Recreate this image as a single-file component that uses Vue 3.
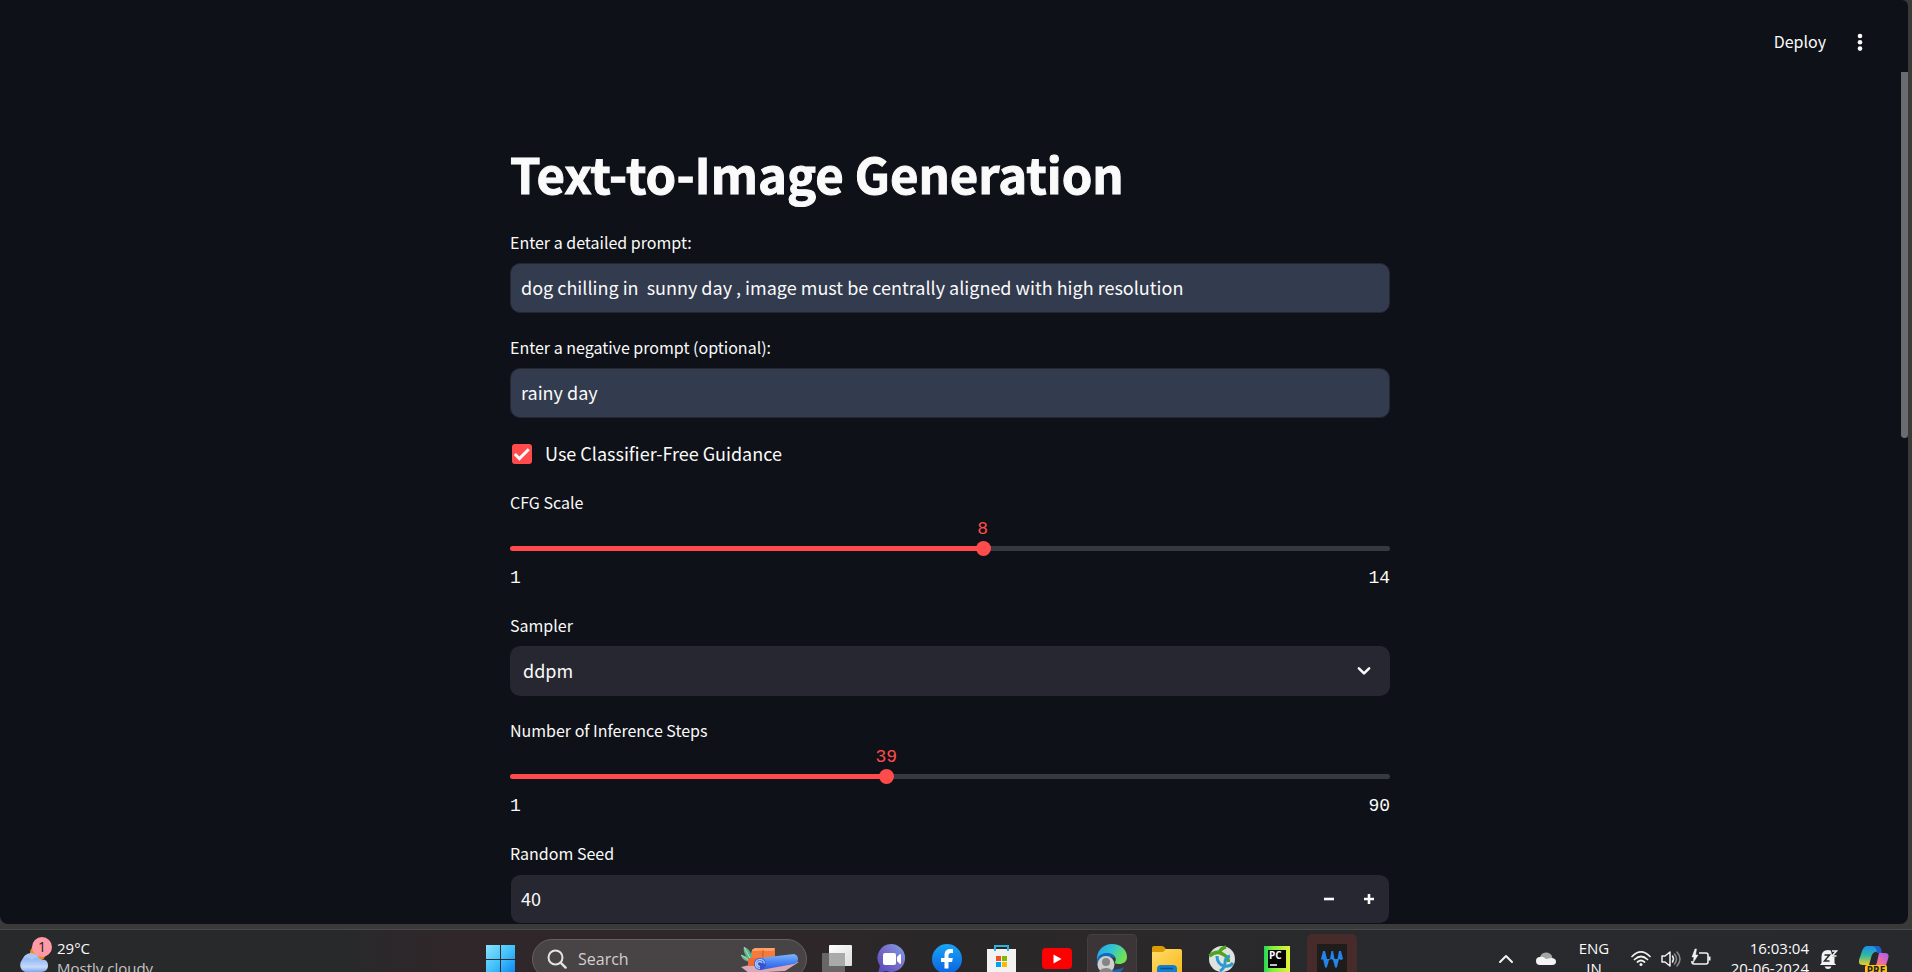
<script setup>
import { ref, computed } from 'vue'

const prompt = ref('dog chilling in  sunny day , image must be centrally aligned with high resolution')
const negativePrompt = ref('rainy day')
const useGuidance = ref(true)
const sampler = ref('ddpm')
const seed = ref(40)
const cfg = ref(8)
const steps = ref(39)

const fraction = (value, max) => (value - 1) / (max - 1)
const cfgStyle = computed(() => ({ '--f': fraction(cfg.value, 14) }))
const stepsStyle = computed(() => ({ '--f': fraction(steps.value, 90) }))
</script>

<template>
  <div class="screen">
    <div class="window-frame">
      <div class="window">
        <div class="content">
          <header class="toolbar">
            <button type="button" class="deploy">Deploy</button>
            <button type="button" class="menu" aria-label="Main menu">
              <svg width="20" height="20" viewBox="0 0 20 20" fill="#fafafa">
                <circle cx="10" cy="4" r="2.3" /><circle cx="10" cy="10.3" r="2.3" /><circle cx="10" cy="16.6" r="2.3" />
              </svg>
            </button>
          </header>

          <main class="column">
            <h1>Text-to-Image Generation</h1>
            <div class="field">
              <label for="prompt">Enter a detailed prompt:</label>
              <input id="prompt" v-model="prompt" type="text" class="text" />
            </div>
            <div class="field">
              <label for="negative">Enter a negative prompt (optional):</label>
              <input id="negative" v-model="negativePrompt" type="text" class="text" />
            </div>
            <label class="check">
              <span class="box">
                <input v-model="useGuidance" type="checkbox" />
                <svg v-if="useGuidance" width="20" height="20" viewBox="0 0 20 20" fill="none" stroke="#fafafa" stroke-width="3">
                  <path d="M2.8 10l4.6 4.6L16.8 5.3" />
                </svg>
              </span>
              <span>Use Classifier-Free Guidance</span>
            </label>
            <div class="slider" :style="cfgStyle">
              <label for="cfg">CFG Scale</label>
              <div class="rail">
                <output for="cfg">{{ cfg }}</output>
                <input id="cfg" v-model.number="cfg" type="range" min="1" max="14" />
              </div>
              <div class="ticks"><span>1</span><span>14</span></div>
            </div>
            <div class="field">
              <label for="sampler">Sampler</label>
              <div class="select">
                <select id="sampler" v-model="sampler"><option>ddpm</option></select>
                <svg width="20" height="20" viewBox="0 0 20 20" fill="none" stroke="#fafafa" stroke-width="2.6" stroke-linecap="round" stroke-linejoin="round">
                  <path d="M4.9 7.4l5.1 5 5.1-5" />
                </svg>
              </div>
            </div>
            <div class="slider" :style="stepsStyle">
              <label for="steps">Number of Inference Steps</label>
              <div class="rail">
                <output for="steps">{{ steps }}</output>
                <input id="steps" v-model.number="steps" type="range" min="1" max="90" />
              </div>
              <div class="ticks"><span>1</span><span>90</span></div>
            </div>
            <div class="field">
              <label for="seed">Random Seed</label>
              <div class="number">
                <input id="seed" v-model.number="seed" type="number" />
                <button type="button" aria-label="Decrease" @click="seed--">
                  <svg width="10" height="10" viewBox="0 0 10 10" stroke="#fafafa" stroke-width="2.6"><path d="M0 5h10" /></svg>
                </button>
                <button type="button" aria-label="Increase" @click="seed++">
                  <svg width="10" height="10" viewBox="0 0 10 10" stroke="#fafafa" stroke-width="2.6"><path d="M0 5h10M5 0v10" /></svg>
                </button>
              </div>
            </div>
          </main>
        </div>
        <div class="scrollbar"><div class="scroll-thumb"></div></div>
      </div>
    </div>

    <footer class="taskbar">
      <div class="left">
        <button type="button" class="weather">
          <svg width="40" height="42" viewBox="0 0 40 42">
            <defs>
              <linearGradient id="cl" x1="0" y1="0" x2="0" y2="1"><stop offset="0" stop-color="#8db4f2" /><stop offset=".65" stop-color="#c6dafa" /><stop offset="1" stop-color="#7ba5ec" /></linearGradient>
            </defs>
            <circle cx="22" cy="23" r="8" fill="#f08a1c" />
            <circle cx="15" cy="32" r="9" fill="#a9c6f7" />
            <path d="M9 42a7.500 7.500 0 0 1 0-14c3-.5 5 0 7 2 3-3 7-3 10 0 4-1 6 2 6 5.500S30 42 25 42z" fill="url(#cl)" />
            <circle cx="26" cy="17" r="10" fill="#ff9aa6" />
            <text x="26" y="22" text-anchor="middle" font-size="14" fill="#222" font-family="Open Sans, sans-serif">1</text>
          </svg>
          <span class="lines"><span>29°C</span><span class="dim">Mostly cloudy</span></span>
        </button>
      </div>

      <nav class="apps">
        <button type="button" class="tile start" aria-label="Start">
          <svg width="50" height="50" viewBox="0 0 50 50">
            <defs><linearGradient id="win" x1="0" y1="0" x2="1" y2="1"><stop offset="0" stop-color="#8be2fd" /><stop offset=".5" stop-color="#43c2fb" /><stop offset="1" stop-color="#0a84f0" /></linearGradient></defs>
            <path d="M11 11h14v14H11zM26 11h14v14H26zM11 26h14v14H11zM26 26h14v14H26z" fill="url(#win)" />
          </svg>
        </button>
        <div class="search">
          <svg width="20" height="20" viewBox="0 0 20 20" fill="none" stroke="#e4e2e2" stroke-width="2">
            <circle cx="8.500" cy="8.500" r="7" /><path d="M13.600 13.600l5 5" stroke-linecap="round" stroke-width="2.4" />
          </svg>
          <input type="text" placeholder="Search" aria-label="Search" />
          <svg width="60" height="28" viewBox="0 0 60 28">
            <defs><linearGradient id="mat" x1="0" y1="0" x2="0" y2="1"><stop offset="0" stop-color="#7eb6fb" /><stop offset=".5" stop-color="#4a86f5" /><stop offset="1" stop-color="#3459dc" /></linearGradient></defs>
            <path d="M1 22l13-3 45-2-14 9-36 2z" fill="#d9a9b6" />
            <path d="M10 17c-5-1-8-3-9-7 3 0 5 1 6 2C4 9 3 5 4 2c4 1 6 4 7 7 0-2 1-4 2-5 1 4 1 9-1 13z" fill="#61b58a" />
            <path d="M1 10l9 6M4 2l7 13" stroke="#a8dfc0" fill="none" />
            <path d="M12 5l3-2h20v10l-3 2H12z" fill="#f47a3d" /><path d="M12 5l3-2h20l-2 3H12z" fill="#ffa067" /><path d="M23 5v8" stroke="#c95a26" />
            <path d="M8 13h13v8H8z" fill="#ef6b35" />
            <path d="M20 13l34-4q4 1 4 5t-4 5l-34 6z" fill="url(#mat)" />
            <circle cx="20" cy="19" r="6" fill="#3654ce" /><path d="M24.500 18.500a4.500 4.500 0 1 0-4.500 5M22 18a2.500 2.500 0 1 0-2 3.500" fill="none" stroke="#a7c8ff" stroke-width="1.500" />
          </svg>
        </div>
        <button type="button" class="tile" aria-label="Task view">
          <svg width="50" height="50" viewBox="0 0 50 50">
            <defs><linearGradient id="tv" x1="0" y1="0" x2="1" y2="1"><stop offset="0" stop-color="#fff" /><stop offset="1" stop-color="#dcdcdc" /></linearGradient></defs>
            <rect x="17" y="11" width="23" height="21" rx="1" fill="url(#tv)" /><rect x="10" y="19" width="23" height="21" rx="1" fill="#777" fill-opacity=".8" />
            <path d="M17 19h16v13H17z" fill="#aaa" />
          </svg>
        </button>
        <button type="button" class="tile" aria-label="Chat">
          <svg width="50" height="50" viewBox="0 0 50 50">
            <defs><linearGradient id="chat" x1="1" y1="0" x2="0" y2="1"><stop offset="0" stop-color="#7ba3ee" /><stop offset=".45" stop-color="#7a70c8" /><stop offset="1" stop-color="#5146b8" /></linearGradient></defs>
            <path d="M25 10a14 14 0 1 1-6 27l-8 2 2-7A14 14 0 0 1 25 10z" fill="url(#chat)" />
            <rect x="16" y="19" width="13" height="12" rx="2" fill="#fff" /><path d="M30 23l3-3q1 0 1 1v8q0 1-1 1l-3-3z" fill="#fff" />
          </svg>
        </button>
        <button type="button" class="tile" aria-label="Facebook">
          <svg width="50" height="50" viewBox="0 0 50 50">
            <defs><linearGradient id="fb" x1="0" y1="0" x2="0" y2="1"><stop offset="0" stop-color="#1aa4f6" /><stop offset="1" stop-color="#0b62e0" /></linearGradient></defs>
            <circle cx="25" cy="25" r="15" fill="url(#fb)" />
            <path d="M22.500 34.500v-6.500h-3.500v-4h3.500v-3c0-4 2.500-6 5.500-6 1 0 2 .1 3 .3v3.700h-2c-1.800 0-2.500 1-2.500 2.300V24h4.300l-.7 4h-3.600v6.500z" fill="#fff" />
          </svg>
        </button>
        <button type="button" class="tile" aria-label="Store">
          <svg width="50" height="50" viewBox="0 0 50 50">
            <path d="M10 15h29v22q0 3-3 3H13q-3 0-3-3z" fill="#f2f2f2" /><path d="M18 17v-5h13v5" fill="none" stroke="#2bb5dd" stroke-width="2" />
            <path d="M19 22h5v5h-5z" fill="#f25022" /><path d="M25 22h5v5h-5z" fill="#7fba00" /><path d="M19 28h5v5h-5z" fill="#00a4ef" /><path d="M25 28h5v5h-5z" fill="#ffb900" />
          </svg>
        </button>
        <button type="button" class="tile" aria-label="YouTube">
          <svg width="50" height="50" viewBox="0 0 50 50"><rect x="10" y="14" width="30" height="21" rx="4" fill="#f00" /><path d="M21.500 20.500v9l8-4.500z" fill="#fff" /></svg>
        </button>
        <button type="button" class="tile active" aria-label="Edge">
          <svg width="50" height="50" viewBox="0 0 50 50">
            <defs><linearGradient id="edge" x1="0" y1="0" x2="1" y2=".4"><stop offset="0" stop-color="#2a9fe8" /><stop offset=".5" stop-color="#2fc3d6" /><stop offset="1" stop-color="#6fe354" /></linearGradient></defs>
            <path d="M10 27C9 17 16 10 25 10c9 0 15 6 15 13 0 5-4 7-8 7-3 0-5-1-4-2 2-3 0-8-6-8-6-1-11 3-12 7z" fill="url(#edge)" />
            <path d="M10 26c1-5 5-7 10-7 4 0 7 2 8 5-5-2-8 2-7 7 1 6 9 6 16 2-2 5-7 8-12 8-9 0-16-7-15-15z" fill="#1668b8" />
            <circle cx="19" cy="30.500" r="8.500" fill="#cfcfcf" /><circle cx="19" cy="28" r="4" fill="#858585" /><path d="M12 38q2-4 7-4t7 4v3H12z" fill="#858585" />
          </svg>
        </button>
        <button type="button" class="tile" aria-label="File Explorer">
          <svg width="50" height="50" viewBox="0 0 50 50">
            <defs><linearGradient id="fold" x1="0" y1="0" x2="1" y2="1"><stop offset="0" stop-color="#ffdc6e" /><stop offset="1" stop-color="#f9b917" /></linearGradient></defs>
            <path d="M10 14q0-2 2-2h8q2 0 4 3h14v5H10z" fill="#dc9a06" /><path d="M10 18h11l3-3h14q2 0 2 2v23H10z" fill="url(#fold)" />
            <path d="M15 40v-5q0-4 4-4h12q4 0 4 4v5z" fill="#1380cf" /><path d="M18 34.500h13" stroke="#0b4f91" stroke-width="1.500" />
          </svg>
        </button>
        <button type="button" class="tile" aria-label="Browser">
          <svg width="50" height="50" viewBox="0 0 50 50" fill="none">
            <circle cx="25" cy="25" r="13" fill="#dfe3df" />
            <path d="M12.500 22q7-6 13-2 6 3 6 8" stroke="#4fa320" stroke-width="3.500" /><path d="M29 13q-5 1-7 6" stroke="#4fa320" stroke-width="3.500" />
            <path d="M20 22q0 8 7 10 6 1 9-3M33 22q-5 1-5 7 0 5-5 8" stroke="#2d9bcf" stroke-width="3" />
          </svg>
        </button>
        <button type="button" class="tile" aria-label="PyCharm">
          <svg width="50" height="50" viewBox="0 0 50 50">
            <defs><linearGradient id="pc" x1="0" y1="0" x2="1" y2="0"><stop offset="0" stop-color="#21d759" /><stop offset=".3" stop-color="#7df038" /><stop offset="1" stop-color="#e8f03c" /></linearGradient></defs>
            <path d="M12 12h26v26H12z" fill="url(#pc)" /><path d="M16 16h18v18H16z" fill="#050505" />
            <text x="17" y="25" font-size="10" font-weight="700" fill="#fff" font-family="Open Sans, sans-serif">PC</text><path d="M18 31h7" stroke="#fff" stroke-width="1.500" />
          </svg>
        </button>
        <button type="button" class="tile alert" aria-label="Audio">
          <svg width="50" height="50" viewBox="0 0 50 50">
            <path d="M10 10h30v30H10z" fill="#1f1d1c" />
            <path d="M14 25l2-8h2l2 8 3 0 1.500-8h1.500l1.500 8h3l1.500-8h2l2 8-2 1-2-1-2 8-1 1-1-1-2-7-2-1-2 1-2 7-1 1-1-1-2-8-1 1z" fill="#2384ec" />
          </svg>
        </button>
      </nav>

      <div class="tray">
        <button type="button" class="chev" aria-label="Hidden icons">
          <svg width="16" height="42" viewBox="0 0 16 42" fill="none" stroke="#f2f2f2" stroke-width="2" stroke-linecap="round" stroke-linejoin="round"><path d="M2 32l6-6 6 6" /></svg>
        </button>
        <button type="button" class="cloud" aria-label="OneDrive">
          <svg width="20" height="42" viewBox="0 0 20 42"><path d="M4 27a6.500 6.500 0 0 1 12-1l1 6H4z" fill="#a5a5a6" /><path d="M4 35a4 4 0 0 1 0-8q3-1 6 2l5-1q5 0 5 3.500T16 35z" fill="#f4f4f4" /></svg>
        </button>
        <button type="button" class="lang"><span class="lines"><span>ENG</span><span>IN</span></span></button>
        <button type="button" class="quick" aria-label="Network, sound and battery">
          <svg width="20" height="42" viewBox="0 0 20 42" fill="none" stroke="#f2f2f2" stroke-width="1.700" stroke-linecap="round">
            <path d="M1 26.500q9-9 18 0M3.500 29.500q6.500-6 13 0M6.500 32q3.500-3 7 0" /><circle cx="10" cy="34.500" r="1.500" fill="#f2f2f2" stroke="none" />
          </svg>
          <svg width="20" height="42" viewBox="0 0 20 42" fill="none" stroke="#f2f2f2" stroke-width="1.500" stroke-linecap="round" stroke-linejoin="round">
            <path d="M1 26h3l5-4v14l-5-4H1z" /><path d="M11.500 26q2 3 0 6" /><path d="M13.500 24q4 5 0 10M16 22q6 7 0 14" stroke="#8a8a8b" />
          </svg>
          <svg width="20" height="42" viewBox="0 0 20 42" fill="none" stroke="#f2f2f2" stroke-width="1.600" stroke-linejoin="round">
            <path d="M8 23h7q2 0 2 2v7q0 2-2 2H3q-2 0-2-2V31" /><path d="M18.500 26.500v4" stroke-width="2" /><path d="M4 19L1 27h2l-1 6 5-8H4.500l1-6z" fill="#f2f2f2" stroke-width=".5" />
          </svg>
        </button>
        <button type="button" class="clock"><span class="lines"><span>16:03:04</span><span>20-06-2024</span></span></button>
        <button type="button" class="bell" aria-label="Notifications">
          <svg width="20" height="42" viewBox="0 0 20 42">
            <path d="M3.500 33v-6q0-7 6.500-7 6.500 0 6.500 7v6l1.500 2H2z" fill="#f4f4f4" /><path d="M6.500 36.500h7q-1 2.500-3.500 2.500t-3.500-2.500z" fill="#f4f4f4" />
            <path d="M6.500 25h5l-5 6h5" fill="none" stroke="#28292b" stroke-width="1.500" /><path d="M12.500 19h7v8h-5z" fill="#28292b" /><path d="M14 21h4.500l-4.500 5h4.500" fill="none" stroke="#f4f4f4" stroke-width="1.500" />
          </svg>
        </button>
        <button type="button" class="copilot" aria-label="Copilot">
          <svg width="30" height="42" viewBox="0 0 30 42">
            <defs>
              <linearGradient id="c1" x1="0" y1="0" x2="0" y2="1"><stop offset="0" stop-color="#1c8cf0" /><stop offset=".5" stop-color="#31b9a0" /><stop offset="1" stop-color="#f0c92a" /></linearGradient>
              <linearGradient id="c2" x1="0" y1="1" x2="1" y2="0"><stop offset="0" stop-color="#ff8a68" /><stop offset=".5" stop-color="#ee6aa8" /><stop offset="1" stop-color="#a45df0" /></linearGradient>
            </defs>
            <path d="M8 16h10q3 0 4 5l-6 1q-3 1-4 6l-2 7H4q-5 0-4-5l3-9q2-5 5-5z" fill="url(#c1)" />
            <path d="M14 16h5q3 0 4 7h-5q0-5-4-7z" fill="#1e5fd0" />
            <path d="M20 23h6q5 0 3 6l-3 9H13q4-1 5-6z" fill="url(#c2)" />
            <rect x="6" y="35" width="22" height="14" rx="2" fill="#ffc20e" />
            <text x="17" y="44" text-anchor="middle" font-size="10" font-weight="700" fill="#222" font-family="Open Sans, sans-serif">PRE</text>
          </svg>
        </button>
      </div>
    </footer>
  </div>
</template>

<style>
body { background: #0e1117; }
</style>

<style scoped>
.screen {
  height: 100vh;
  display: flex;
  flex-direction: column;
  overflow: hidden;
  background: #3a3a39;
  color: #fafafa;
  font-family: "Noto Sans CJK SC", "Noto Sans", sans-serif;
}
.screen *, .screen { box-sizing: border-box; }
button { border: 0; padding: 0; background: none; color: inherit; font: inherit; }
input, select { font: inherit; color: inherit; outline: none; }
svg { display: block; flex: none; }

.window-frame { flex: 1; min-height: 0; padding-right: 4px; display: flex; }
.window { flex: 1; display: flex; overflow: hidden; background: #0e1117; border-radius: 0 6px 8px 8px; }
.content { flex: 1; overflow: hidden; }
.scrollbar { width: 8px; padding: 72px 0 0 1px; }
.scroll-thumb { height: 43%; background: #6b6c70; border-radius: 0 0 4px 4px; }

.toolbar { height: 82px; padding-right: 30px; display: flex; justify-content: flex-end; align-items: center; gap: 24px; }
.deploy { font-size: 16px; line-height: 28px; }
.menu svg { margin-top: 1px; }

.column { width: 880px; max-width: 100%; margin: 0 auto; padding-top: 58px; display: flex; flex-direction: column; gap: 20px; }
h1 { margin: 0 0 2px; font-size: 49px; line-height: 66px; font-weight: 700; -webkit-text-stroke: 1px #fafafa; }
.field, .slider { display: flex; flex-direction: column; }
.field label, .slider label { font-size: 16px; line-height: 28px; }
.field label { margin-bottom: 7px; }
.text { width: 100%; height: 50px; padding: 0 10px 2px; font-size: 18px; border: 1px solid #262730; border-radius: 10px; background: #333b4f; }

.check { height: 30px; display: flex; gap: 13px; padding-left: 2px; font-size: 18px; line-height: 30px; }
.box { display: grid; margin-top: 6px; height: 20px; }
.box > * { grid-area: 1 / 1; }
.box input { appearance: none; margin: 0; width: 20px; height: 20px; border: 2px solid #41444c; border-radius: 3px; }
.box input:checked { background: #ff4b4b; border-color: #ff4b4b; }
.box svg { pointer-events: none; z-index: 1; }

.rail { position: relative; padding-top: 25px; }
.rail output {
  position: absolute;
  top: -1px;
  left: calc(7px + var(--f) * (100% - 15px));
  transform: translateX(-50%);
  color: #ff4b4b;
  font: 18px/28px "Liberation Mono", monospace;
}
.rail input {
  appearance: none;
  display: block;
  width: 100%;
  height: 15px;
  margin: 0;
  background: none;
}
.rail input::-webkit-slider-runnable-track {
  height: 5px;
  border-radius: 3px;
  background: linear-gradient(to right, #ff4b4b calc(var(--f) * 100%), #363940 0);
}
.rail input::-webkit-slider-thumb {
  appearance: none;
  width: 15px;
  height: 15px;
  margin-top: -5px;
  border-radius: 50%;
  background: #ff4b4b;
}
.ticks { height: 35px; padding-top: 8px; display: flex; justify-content: space-between; font: 18px/28px "Liberation Mono", monospace; }

.select { display: grid; align-items: center; }
.select > * { grid-area: 1 / 1; }
.select select { appearance: none; width: 100%; height: 50px; padding: 0 13px 2px; font-size: 18px; border: 0; border-radius: 10px; background: #262730; }
.select svg { justify-self: end; margin-right: 16px; pointer-events: none; }

.number { height: 50px; display: flex; border: 1px solid transparent; border-radius: 10px; background: #262730; background-clip: padding-box; }
.number input { appearance: textfield; flex: 1; min-width: 0; border: 0; padding: 0 10px 2px; font-size: 18px; background: none; }
.number input::-webkit-inner-spin-button { appearance: none; margin: 0; }
.number button { width: 40px; display: grid; place-items: center; }

.taskbar {
  flex: none;
  height: 48px;
  display: flex;
  align-items: flex-start;
  overflow: hidden;
  border-top: 5px solid #3a3a3a;
  box-shadow: inset 0 1px #4a4a4a;
  padding-top: 1px;
  background: linear-gradient(to right, #28292b 18%, #2f272a 23%, #2e2729 42%, #292728 50%, #2c2829 58%, #282a2d 70%, #28292d);
  font: 15px/20px "Open Sans", "Noto Sans", sans-serif;
}
.left { flex: 0 1 475px; padding-left: 16px; }
.weather { display: flex; gap: 1px; text-align: left; }
.lines { display: flex; flex-direction: column; padding-top: 8px; }
.dim { color: #c4c4c4; }
.apps { display: flex; gap: 5px; }
.tile { width: 50px; height: 50px; margin-top: 4px; border-radius: 5px; }
.start { margin-right: 2px; }
.active { background: #3b3538; box-shadow: inset 0 0 0 1px #433e41; }
.alert { background: #472a2a; }
.search { width: 275px; height: 40px; margin-top: 9px; padding: 0 6px 0 14px; display: flex; align-items: center; border: 1px solid #666062; border-radius: 20px; background: #484345; }
.search input { flex: 1; min-width: 0; padding: 0 0 0 11px; border: 0; background: none; font-size: 16px; }
.search input::placeholder { color: #d2cfd0; opacity: 1; }
.tray { margin-left: auto; padding-right: 13px; display: flex; align-items: flex-start; }
.chev, .cloud, .bell, .copilot { display: flex; justify-content: center; }
.chev { width: 40px; }
.cloud { width: 40px; }
.lang { width: 56px; text-align: center; }
.quick { width: 98px; padding: 0 9px; display: flex; gap: 10px; }
.clock { width: 92px; padding-right: 3px; text-align: right; }
.bell { width: 32px; }
.copilot { width: 50px; margin-left: 5px; }
</style>
